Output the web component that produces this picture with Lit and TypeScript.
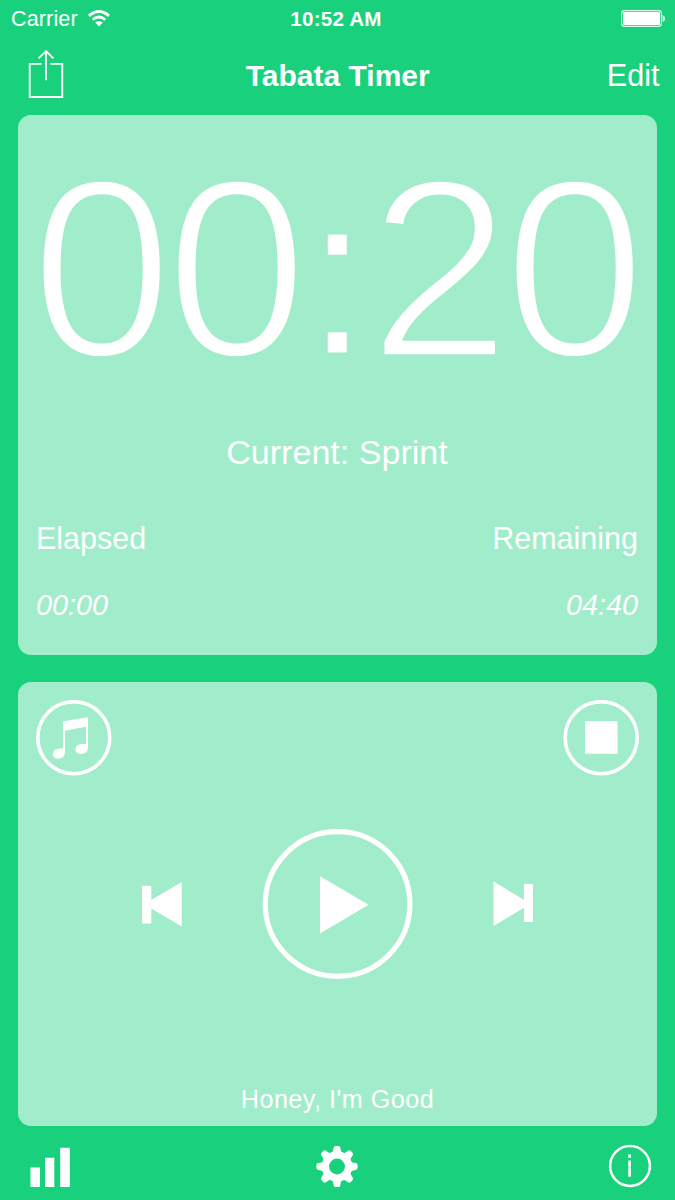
import { LitElement, html, css, svg } from "lit";
import { customElement, property } from "lit/decorators.js";

const gearTeeth = [0, 45, 90, 135, 180, 225, 270, 315];

@customElement("status-bar")
class StatusBar extends LitElement {
  static styles = css`
    :host { display: grid; grid-template-columns: 1fr auto 1fr; height: 37px; align-items: center; line-height: 37px; font-size: 21.6px; padding: 0 10px 0 11px; }
    .left { display: flex; align-items: center; gap: 10px; letter-spacing: 0.1px; }
    .time { font-weight: 700; font-size: 20.6px; letter-spacing: 0.2px; margin-left: -4px; }
    .right { display: flex; justify-content: flex-end; }
    svg { display: block; }
  `;
  render() {
    return html`
      <div class="left"><span>Carrier</span>
        <svg width="22" height="17" viewBox="0 0 22 17" fill="none" stroke="#fff">
          <path d="M1 5.8Q11-2.6 21 5.8" stroke-width="2.9" />
          <path d="M4.7 9.7Q11 4.4 17.3 9.7" stroke-width="2.8" />
          <path d="M7.2 12.6Q11 9.6 14.8 12.6L11 16.6Z" fill="#fff" stroke="none" />
        </svg>
      </div>
      <div class="time">10:52 AM</div>
      <div class="right">
        <svg width="44" height="17" viewBox="0 0 44 17">
          <rect x="0.6" y="0.6" width="39.8" height="15.8" rx="2.6" fill="none" stroke="#fff" stroke-opacity=".85" stroke-width="1.1" />
          <rect x="2" y="2" width="37" height="13" rx="1" fill="#fff" />
          <path d="M41.6 5Q44 6 44 8.5T41.6 12Z" fill="#fff" />
        </svg>
      </div>`;
  }
}

@customElement("nav-header")
class NavHeader extends LitElement {
  static styles = css`
    :host { display: grid; grid-template-columns: 1fr auto 1fr; height: 78px; align-items: center; line-height: 78px; font-size: 30.6px; padding: 0 15.5px 0 28px; }
    .title { font-weight: 700; font-size: 30px; margin-left: -12px; }
    .edit { text-align: right; margin-top: -2px; }
    .share { display: block; margin-top: -5px; }
  `;
  render() {
    return html`
      <svg class="share" width="36" height="48" viewBox="0 0 36 48" fill="none" stroke="#fff" stroke-width="1.8">
        <path d="M13.5 13.8H1.7V47H34.3V13.8H22.5M18 30.2V1.5M10.6 8.3 18 1 25.4 8.3" />
      </svg>
      <div class="title">Tabata Timer</div>
      <div class="edit">Edit</div>`;
  }
}

@customElement("timer-card")
class TimerCard extends LitElement {
  @property() time = "00:20";
  static styles = css`
    :host { display: block; box-sizing: border-box; height: 540px; padding: 32px 19px 0 18px; border-radius: 13px; background: #a1edcb; }
    .clock { display: flex; justify-content: center; height: 243px; margin-right: -2.4px; }
    .digit { flex: none; width: 135px; display: flex; justify-content: center; font-size: 255px; line-height: 244px; -webkit-text-stroke: 5.6px #a1edcb; }
    .colon { flex: none; box-sizing: border-box; width: 68px; padding-right: 2px; text-align: center; font-size: 229px; line-height: 256px; -webkit-text-stroke: 2.8px #a1edcb; }
    .current { margin-top: 44px; text-align: center; font-size: 34.1px; line-height: 36px; }
    .row { display: flex; justify-content: space-between; font-size: 30.5px; line-height: 34px; margin-top: 51px; }
    .values { margin-top: 33px; font-size: 28.8px; font-style: italic; }
  `;
  render() {
    return html`
      <div class="clock">${[...this.time].map((c) => html`<span class=${c === ":" ? "colon" : "digit"}>${c}</span>`)}</div>
      <div class="current">Current: Sprint</div>
      <div class="row"><span>Elapsed</span><span>Remaining</span></div>
      <div class="row values"><span>00:00</span><span>04:40</span></div>`;
  }
}

@customElement("player-card")
class PlayerCard extends LitElement {
  static styles = css`
    :host { display: flex; flex-direction: column; box-sizing: border-box; height: 444px; margin-top: 27px; padding: 18px 18px 9px; border-radius: 13px; background: #a1edcb; }
    svg { display: block; fill: #fff; }
    .top { display: flex; justify-content: space-between; }
    .controls { display: flex; justify-content: space-between; align-items: center; margin: 52px 105px 0; }
    .ring { fill: none; stroke: #fff; }
    .song { margin-top: auto; text-align: center; font-size: 25.2px; line-height: 36px; letter-spacing: 0.48px; }
  `;
  render() {
    return html`
      <div class="top">
        <svg width="76" height="76" viewBox="0 0 76 76">
          <circle class="ring" cx="37.8" cy="37.7" r="36" stroke-width="3.6" />
          <path d="M27 21.2 52 17.2V47.5Q52 53.8 45 54Q39.6 53.8 39.4 49.3Q39.6 44.2 46 44H50V26.7L29 30.7V52Q28.6 58.6 22 58.7Q17 58.6 17 54.3Q17.2 48.8 23 48.6H27Z" />
        </svg>
        <svg width="76" height="76" viewBox="0 0 76 76">
          <circle class="ring" cx="38.2" cy="37.7" r="36" stroke-width="3.6" />
          <rect x="22" y="21.2" width="32.5" height="32.5" />
        </svg>
      </div>
      <div class="controls">
        <svg width="42" height="46" viewBox="0 0 42 46">
          <path d="M1 4.8H10.3V19L40.7 1V45.5L10.3 27.6V42.6H1Z" />
        </svg>
        <svg width="152" height="152" viewBox="0 0 152 152">
          <circle class="ring" cx="75.6" cy="76" r="72.3" stroke-width="5.2" />
          <path d="M58 48.3 106.7 76.8 58 105.5Z" />
        </svg>
        <svg width="42" height="46" viewBox="0 0 42 46">
          <path d="M41 3H32V18.7L1.5 .5V45L32 26.8V41H41Z" />
        </svg>
      </div>
      <div class="song">Honey, I'm Good</div>`;
  }
}

@customElement("bottom-bar")
class BottomBar extends LitElement {
  static styles = css`
    :host { display: grid; grid-template-columns: 1fr auto 1fr; align-items: center; height: 74px; padding: 6px 23px 0 29px; box-sizing: border-box; }
    svg { display: block; fill: #fff; }
    .gear { margin-left: -7px; }
    .info { justify-self: end; }
    .hole { fill: #19d17c; }
    .ring { fill: none; stroke: #fff; stroke-width: 2.5; }
  `;
  render() {
    return html`
      <svg width="42" height="42" viewBox="0 0 42 42">
        <path d="M1.5 22.5H11V42H1.5ZM16 12.8H25.3V42H16ZM31.2 2.8H40.8V42H31.2Z" />
      </svg>
      <svg class="gear" width="42" height="42" viewBox="-21 -21.5 42 42">
        <circle r="15.2" />
        ${gearTeeth.map((a) => svg`<path transform="rotate(${a})" d="M-5.5-13Q-3.6-15-3.4-18.5Q-3.2-20.6-1.5-20.6H1.5Q3.2-20.6 3.4-18.5Q3.6-15 5.5-13Z" />`)}
        <circle class="hole" r="7.9" />
      </svg>
      <svg class="info" width="44" height="44" viewBox="0 0 44 44">
        <circle class="ring" cx="22" cy="22" r="19.9" />
        <path d="M20.2 10.6H23V13.8H20.2ZM20.3 16.4H22.9V32.8H20.3Z" />
      </svg>`;
  }
}

@customElement("app-root")
class AppRoot extends LitElement {
  static styles = css`
    :host { display: block; width: 675px; height: 1200px; overflow: hidden; background: #19d17c; color: #fff; font-family: "Liberation Sans", Arial, sans-serif; }
    .cards { padding: 0 18px; }
  `;
  render() {
    return html`
      <status-bar></status-bar>
      <nav-header></nav-header>
      <main class="cards">
        <timer-card></timer-card>
        <player-card></player-card>
      </main>
      <bottom-bar></bottom-bar>`;
  }
}
